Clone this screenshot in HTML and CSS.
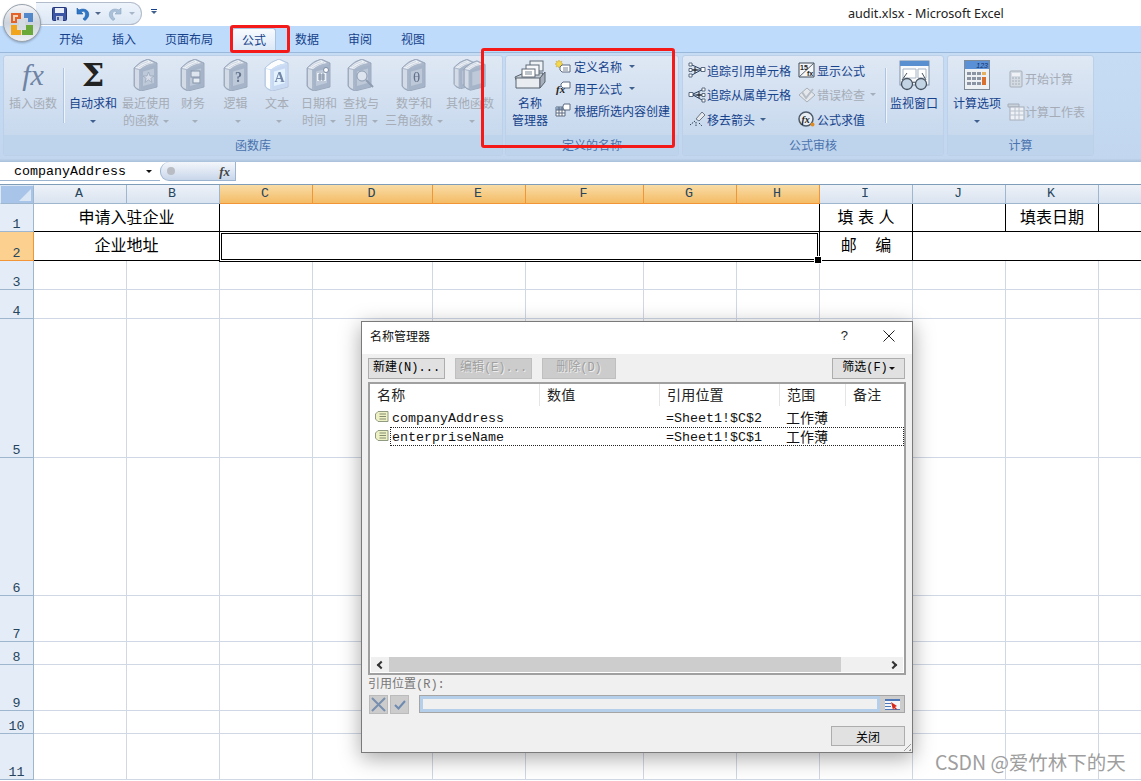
FILE: index.html
```html
<!DOCTYPE html>
<html lang="zh-CN">
<head>
<meta charset="utf-8">
<title>audit.xlsx - Microsoft Excel</title>
<link rel="stylesheet" href="styles.css">
</head>
<body>
<svg class="defs" width="0" height="0" aria-hidden="true">
  <defs>
    <linearGradient id="orbG" x1="0" y1="0" x2="0" y2="1"><stop offset="0" stop-color="#f7f8fa"/><stop offset=".5" stop-color="#ccd3dc"/><stop offset="1" stop-color="#eef1f4"/></linearGradient>
    <symbol id="book" viewBox="0 0 26 32">
      <path d="M1 9Q7 2 15 0L24 4V28L8 32Q2 30 1 27Z" fill="#a9b6c9" stroke="#8d9bb0" stroke-width=".8"/>
      <path d="M2 9Q8 3 15 1L21 4Q13 5 7 10Z" fill="#eef2f7"/>
      <path d="M4 8Q9 4 15 2.500M6 9Q11 5.500 18 3.500" stroke="#b8c3d2" stroke-width=".6" fill="none"/>
      <path d="M7 10.500L23.500 5.500V27.500L8 31.500Z" fill="#a4b2c7"/>
      <path d="M2 10L6 11V30Q3 29 2 27Z" fill="#d3dbe6"/>
      <path d="M10 12.500L21 9.500V24L10 27Z" fill="#bcc7d7"/>
    </symbol>
    <symbol id="tag" viewBox="0 0 14 11">
      <path d="M3 .5H13V10.500H3L.5 8V3Z" fill="#eef1c4" stroke="#8f9a80"/>
      <path d="M4.500 3H11M4.500 5.500H11M4.500 8H11" stroke="#848c70"/>
    </symbol>
    <symbol id="nodes" viewBox="0 0 18 16">
      <path d="M1 1h3v3H1zM1 12h3v3H1zM1 6.500h3v3H1zM13 5.500h4v4h-4z" fill="#fff" stroke="#5a6a80"/>
      <path d="M4 3L13 7M4 8H13M4 13L13 8" stroke="#28405f" fill="none"/>
      <path d="M7 5V11M4.500 8H9.500" stroke="#222"/>
    </symbol>
  </defs>
</svg>

<div class="app">
  <header class="titlebar">
    <div class="qat">
      <svg class="qi" width="15" height="14" viewBox="0 0 15 14"><rect x=".5" y=".5" width="14" height="13" rx="1" fill="#3c55a5" stroke="#25357a"/><rect x="3" y="1" width="9" height="5" fill="#e9eef8"/><rect x="4" y="9" width="7" height="5" fill="#c6cede"/><rect x="5" y="10" width="2" height="3" fill="#3c55a5"/></svg>
      <svg class="qi undo" width="16" height="14" viewBox="0 0 16 14"><path d="M3 1V7H9L7 5Q10 3 11.500 6Q12.500 9 9 12L11 13.500Q16.500 9.500 14 4.500Q10.500 .5 5 3Z" fill="#2f78c8" stroke="#1e5ca8" stroke-width=".6"/></svg>
      <span class="caret caret-dark qc"></span>
      <svg class="qi redo" width="16" height="14" viewBox="0 0 16 14"><path d="M13 1V7H7L9 5Q6 3 4.500 6Q3.500 9 7 12L5 13.500Q-.5 9.500 2 4.500Q5.500 .5 11 3Z" fill="#a9c0d8" stroke="#8ea8c2" stroke-width=".6"/></svg>
      <span class="caret caret-light qc"></span>
    </div>
    <div class="customize"><span class="dash"></span><span class="caret caret-navy"></span></div>
    <div class="doc-title">audit.xlsx - Microsoft Excel</div>
  </header>

  <div class="orb">
    <svg width="38" height="38" viewBox="0 0 38 38">
      <circle cx="19" cy="19" r="18.500" fill="url(#orbG)" stroke="#9aa3ad"/>
      <path d="M8 9h10v6h-4v4H8z" fill="#e2622a"/><path d="M10 11h5v2h-3v4h-2z" fill="#f6d3b8"/>
      <path d="M21 9h9v9h-5v-4h-4z" fill="#3a78c4" opacity=".85"/>
      <path d="M8 21h6v5h4v5H8z" fill="#f0a51c"/><path d="M23 21h7v10H19v-5h4z" fill="#6aa83a"/>
      <path d="M16 16h6v6h-6z" fill="#d5dbe2"/>
    </svg>
  </div>

  <nav class="tabs">
    <span class="tab">开始</span>
    <span class="tab">插入</span>
    <span class="tab">页面布局</span>
    <span class="tab tab-active">公式</span>
    <span class="tab">数据</span>
    <span class="tab">审阅</span>
    <span class="tab">视图</span>
  </nav>

  <section class="ribbon">
    <div class="group g-lib">
      <div class="group-body">
        <div class="cmd off w50"><div class="cmd-icon"><span class="fx-big">fx</span></div><div class="lbl">插入函数</div></div>
        <span class="vsep s1"></span>
        <div class="cmd on w48"><div class="cmd-icon"><span class="sigma">Σ</span></div><div class="lbl">自动求和</div><div class="lbl"><span class="caret caret-navy"></span></div></div>
        <div class="cmd off w50 ml4"><div class="cmd-icon"><svg class="bk" width="26" height="32"><use href="#book"/><path d="M15.500 13l1.500 4h4l-3.200 2.400 1.200 4-3.500-2.500-3.500 2.500 1.200-4L10 17h4z" fill="#d6dde8" stroke="#94a2b6" stroke-width=".7"/></svg></div><div class="lbl">最近使用</div><div class="lbl">的函数<span class="caret caret-grey"></span></div></div>
        <div class="cmd off w44"><div class="cmd-icon"><svg class="bk" width="26" height="32"><use href="#book"/><rect x="11" y="12" width="9" height="6" fill="#dfe5ee" stroke="#7f8ea5"/><rect x="13" y="19" width="7" height="5" fill="#e8edf4" stroke="#7f8ea5"/></svg></div><div class="lbl">财务</div><div class="lbl"><span class="caret caret-grey"></span></div></div>
        <div class="cmd off w41"><div class="cmd-icon"><svg class="bk" width="26" height="32"><use href="#book"/><text x="15.500" y="23" class="bk-q">?</text></svg></div><div class="lbl">逻辑</div><div class="lbl"><span class="caret caret-grey"></span></div></div>
        <div class="cmd off w42"><div class="cmd-icon"><svg class="bk bk-white" width="26" height="32"><use href="#book"/><text x="15.500" y="23" class="bk-a">A</text></svg></div><div class="lbl">文本</div><div class="lbl"><span class="caret caret-grey"></span></div></div>
        <div class="cmd off w42"><div class="cmd-icon"><svg class="bk" width="26" height="32"><use href="#book"/><path d="M11 14h9v8h-9z" fill="#eef2f7"/><path d="M12 16h7M12 18h7M12 20h7M14 14v8M17 14v8" stroke="#7888a0"/><circle cx="20" cy="11" r="2.500" fill="#fff" stroke="#7888a0"/></svg></div><div class="lbl">日期和</div><div class="lbl">时间<span class="caret caret-grey"></span></div></div>
        <div class="cmd off w42"><div class="cmd-icon"><svg class="bk" width="28" height="32"><use href="#book" width="26" height="32"/><circle cx="15" cy="17" r="5" fill="#dfe5ee" stroke="#8b99ae"/><path d="M19 21l7 7" stroke="#8b99ae" stroke-width="2"/></svg></div><div class="lbl">查找与</div><div class="lbl">引用<span class="caret caret-grey"></span></div></div>
        <div class="cmd off w64"><div class="cmd-icon"><svg class="bk" width="26" height="32"><use href="#book"/><text x="15.500" y="23" class="bk-t">θ</text></svg></div><div class="lbl">数学和</div><div class="lbl">三角函数<span class="caret caret-grey"></span></div></div>
        <div class="cmd off w48"><div class="cmd-icon"><svg class="bk" width="34" height="32" viewBox="0 0 34 32"><use href="#book" width="24" height="30"/><use href="#book" x="10" y="1" width="24" height="31"/></svg></div><div class="lbl">其他函数</div><div class="lbl"><span class="caret caret-grey"></span></div></div>
      </div>
      <div class="group-label">函数库</div>
    </div>

    <div class="group g-names">
      <div class="group-body">
        <div class="cmd on w38 ink"><div class="cmd-icon">
          <svg width="32" height="30" viewBox="0 0 32 30"><path d="M1 17L10 13H29L26 22H3Z" fill="#c3cbd5" stroke="#59636f"/><path d="M2 18H26V28H2Z" fill="#e9ecf0" stroke="#59636f"/><path d="M26 18L31 12V22L26 28Z" fill="#a6afbb" stroke="#59636f"/><rect x="16" y="1" width="13" height="10" fill="#eef2f5" stroke="#5f6a77"/><rect x="12" y="5" width="13" height="10" fill="#f6f8fa" stroke="#5f6a77"/><rect x="8" y="9" width="13" height="8" fill="#fff" stroke="#5f6a77"/><path d="M11 12h7M11 14h7" stroke="#7b8794"/></svg>
        </div><div class="lbl">名称</div><div class="lbl">管理器</div></div>
        <div class="small-col names-col">
          <div class="sm on"><svg width="16" height="14" viewBox="0 0 16 14"><path d="M4 1l1 2 2-1-1 2 2 1-2 1 1 2-2-1-1 2-1-2-2 1 1-2-2-1 2-1-1-2 2 1z" fill="#f5d94a" stroke="#c9a52a" stroke-width=".5"/><path d="M7 6H15V13H7L5 11V8Z" fill="#fff" stroke="#5c6b80"/><path d="M8 9h5M8 11h5" stroke="#7a8798"/></svg><span class="sm-text">定义名称</span><span class="caret caret-navy"></span></div>
          <div class="sm on"><svg width="16" height="14" viewBox="0 0 16 14"><text x="1" y="12" class="mini-fx">fx</text><path d="M8 1H15V7H8L6 5V3Z" fill="#fff" stroke="#5c6b80"/></svg><span class="sm-text">用于公式</span><span class="caret caret-navy"></span></div>
          <div class="sm on"><svg width="16" height="14" viewBox="0 0 16 14"><path d="M1 4h9v9H1z" fill="#fff" stroke="#5c6b80"/><path d="M1 4h9v3H1z" fill="#8aa2c0"/><path d="M4 4v9M7 4v9M1 7h9M1 10h9" stroke="#5c6b80"/><path d="M9 1H15V7H9L8 5V3Z" fill="#fff" stroke="#5c6b80"/></svg><span class="sm-text">根据所选内容创建</span></div>
        </div>
      </div>
      <div class="group-label">定义的名称</div>
    </div>

    <div class="group g-audit">
      <div class="group-body">
        <div class="small-col audit-a">
          <div class="sm on"><svg width="18" height="16"><use href="#nodes"/></svg><span class="sm-text">追踪引用单元格</span></div>
          <div class="sm on"><svg width="18" height="16" class="flip"><use href="#nodes"/></svg><span class="sm-text">追踪从属单元格</span></div>
          <div class="sm on"><svg width="18" height="16" viewBox="0 0 18 16"><path d="M8 8L14 1L17 4L11 10Z" fill="#e6e9ee" stroke="#6d7886"/><path d="M7 10L2 14M8 11V15M11 12L14 15" stroke="#2d4159" stroke-dasharray="1.500 1"/></svg><span class="sm-text">移去箭头</span><span class="caret caret-navy"></span></div>
        </div>
        <div class="small-col audit-b">
          <div class="sm on"><svg width="18" height="16" viewBox="0 0 18 16"><path d="M1 1h15v14H1z" fill="#f4f6f8" stroke="#3f4a58"/><path d="M16 1L1 15" stroke="#59636f"/><text x="2" y="8" class="mini-n">15</text><text x="9" y="14" class="mini-n">fx</text></svg><span class="sm-text">显示公式</span></div>
          <div class="sm off"><svg width="18" height="16" viewBox="0 0 18 16"><path d="M9 1L17 8L9 15L1 8Z" fill="#e4e8ec" stroke="#a9b0b9"/><path d="M4 5L8 11L15 2" fill="none" stroke="#b7bdc5" stroke-width="2"/></svg><span class="sm-text">错误检查</span><span class="caret caret-grey"></span></div>
          <div class="sm on"><svg width="18" height="16" viewBox="0 0 18 16"><circle cx="8" cy="8" r="7" fill="#e8edf3" stroke="#4d5a6a" stroke-width="1.500"/><text x="3.500" y="11.500" class="mini-e">fx</text><circle cx="14.500" cy="13.500" r="2" fill="#e08a20"/></svg><span class="sm-text">公式求值</span></div>
        </div>
        <span class="vsep s2"></span>
        <div class="cmd on w48 watch"><div class="cmd-icon">
          <svg width="31" height="31" viewBox="0 0 31 31"><rect x="1" y="1" width="29" height="24" fill="#f8fafc" stroke="#7f92aa"/><rect x="1" y="1" width="29" height="5" fill="#5a8fd0"/><path d="M4 9h13v9H4zM19 9h8v9h-8z" fill="#fff" stroke="#a9b5c4"/><circle cx="8" cy="24" r="5.500" fill="#c3d4e4" stroke="#47525f" stroke-width="1.300"/><circle cx="22" cy="24" r="5.500" fill="#c3d4e4" stroke="#47525f" stroke-width="1.300"/><path d="M13 23q2-2 4 0M3 20L8 13M27 20L23 13" stroke="#47525f" fill="none"/></svg>
        </div><div class="lbl">监视窗口</div></div>
      </div>
      <div class="group-label">公式审核</div>
    </div>

    <div class="group g-calc">
      <div class="group-body">
        <div class="cmd on w48 calc-big"><div class="cmd-icon">
          <svg width="26" height="30" viewBox="0 0 26 30"><rect x=".5" y=".5" width="25" height="29" fill="#eef1f4" stroke="#7f8a98"/><path d="M1 1h24v8H1z" fill="#5a90d6"/><text x="24" y="8" class="calc-n">123</text><g class="keys"><rect x="3" y="12" width="4" height="3"/><rect x="8" y="12" width="4" height="3"/><rect x="13" y="12" width="4" height="3"/><rect x="3" y="17" width="4" height="3"/><rect x="8" y="17" width="4" height="3"/><rect x="13" y="17" width="4" height="3"/><rect x="3" y="22" width="4" height="3"/><rect x="8" y="22" width="4" height="3"/><rect x="13" y="22" width="4" height="3"/></g><rect x="18" y="12" width="4" height="3" fill="#e4b060"/><rect x="18" y="17" width="4" height="8" fill="#d87030"/></svg>
        </div><div class="lbl">计算选项</div><div class="lbl"><span class="caret caret-navy"></span></div></div>
        <div class="small-col calc-col">
          <div class="sm off calc-first"><svg width="14" height="18" viewBox="0 0 14 18"><rect x="1" y="1" width="12" height="16" rx="1" fill="#d5dbe3" stroke="#a5aeb9"/><path d="M3 3h8v3H3z" fill="#eef1f5"/><path d="M3 8h8M3 11h8M3 14h8" stroke="#a5aeb9" stroke-dasharray="2 1"/></svg><span class="sm-text">开始计算</span></div>
          <div class="sm off calc-second"><svg width="18" height="18" viewBox="0 0 18 18"><path d="M1 1h11v3H1z" fill="#c9d1db" stroke="#a5aeb9"/><rect x="3" y="4" width="14" height="13" fill="#eef1f5" stroke="#a5aeb9"/><path d="M3 8h14M3 12h14M8 4v13M12 4v13" stroke="#bac2cc"/></svg><span class="sm-text">计算工作表</span></div>
        </div>
      </div>
      <div class="group-label">计算</div>
    </div>
  </section>

  <div class="formula-strip"></div>
  <div class="formula-bar">
    <div class="namebox"><span class="namebox-text">companyAddress</span><span class="caret caret-black"></span></div>
    <div class="fx-pill"><span class="pill-dot"></span><span class="pill-fx">fx</span></div>
  </div>

  <div class="sheet">
    <div class="corner"><span class="corner-tri"></span></div>
    <div class="ch">A</div><div class="ch">B</div><div class="ch sel">C</div><div class="ch sel">D</div><div class="ch sel">E</div><div class="ch sel">F</div><div class="ch sel">G</div><div class="ch sel">H</div><div class="ch">I</div><div class="ch">J</div><div class="ch">K</div><div class="ch"></div>

    <div class="rh">1</div>
    <div class="c blk-b blk-r span2 txt">申请入驻企业</div>
    <div class="c blk-b blk-r span6"></div>
    <div class="c blk-b blk-r txt">填 表 人</div>
    <div class="c blk-b blk-r"></div>
    <div class="c blk-b blk-r txt">填表日期</div>
    <div class="c blk-b"></div>

    <div class="rh sel">2</div>
    <div class="c blk-b blk-r span2 txt">企业地址</div>
    <div class="c span6 active"></div>
    <div class="c blk-b blk-r txt">邮&nbsp;&nbsp;&nbsp;&nbsp;编</div>
    <div class="c blk-b span3"></div>

    <div class="rh">3</div><div class="c"></div><div class="c"></div><div class="c"></div><div class="c"></div><div class="c"></div><div class="c"></div><div class="c"></div><div class="c"></div><div class="c"></div><div class="c"></div><div class="c"></div><div class="c"></div>
    <div class="rh">4</div><div class="c"></div><div class="c"></div><div class="c"></div><div class="c"></div><div class="c"></div><div class="c"></div><div class="c"></div><div class="c"></div><div class="c"></div><div class="c"></div><div class="c"></div><div class="c"></div>
    <div class="rh">5</div><div class="c"></div><div class="c"></div><div class="c"></div><div class="c"></div><div class="c"></div><div class="c"></div><div class="c"></div><div class="c"></div><div class="c"></div><div class="c"></div><div class="c"></div><div class="c"></div>
    <div class="rh">6</div><div class="c"></div><div class="c"></div><div class="c"></div><div class="c"></div><div class="c"></div><div class="c"></div><div class="c"></div><div class="c"></div><div class="c"></div><div class="c"></div><div class="c"></div><div class="c"></div>
    <div class="rh">7</div><div class="c"></div><div class="c"></div><div class="c"></div><div class="c"></div><div class="c"></div><div class="c"></div><div class="c"></div><div class="c"></div><div class="c"></div><div class="c"></div><div class="c"></div><div class="c"></div>
    <div class="rh">8</div><div class="c"></div><div class="c"></div><div class="c"></div><div class="c"></div><div class="c"></div><div class="c"></div><div class="c"></div><div class="c"></div><div class="c"></div><div class="c"></div><div class="c"></div><div class="c"></div>
    <div class="rh">9</div><div class="c"></div><div class="c"></div><div class="c"></div><div class="c"></div><div class="c"></div><div class="c"></div><div class="c"></div><div class="c"></div><div class="c"></div><div class="c"></div><div class="c"></div><div class="c"></div>
    <div class="rh">10</div><div class="c"></div><div class="c"></div><div class="c"></div><div class="c"></div><div class="c"></div><div class="c"></div><div class="c"></div><div class="c"></div><div class="c"></div><div class="c"></div><div class="c"></div><div class="c"></div>
    <div class="rh">11</div><div class="c"></div><div class="c"></div><div class="c"></div><div class="c"></div><div class="c"></div><div class="c"></div><div class="c"></div><div class="c"></div><div class="c"></div><div class="c"></div><div class="c"></div><div class="c"></div>
  </div>
</div>

<div class="mark mark-tab"></div>
<div class="mark mark-names"></div>

<div class="dialog">
  <div class="dlg-title">
    <span class="dlg-name">名称管理器</span>
    <span class="dlg-help">?</span>
    <svg class="dlg-close" width="12" height="12" viewBox="0 0 12 12"><path d="M.5 .5L11.500 11.500M11.500 .5L.5 11.500" stroke="#222" fill="none"/></svg>
  </div>
  <div class="dlg-body">
    <div class="dlg-tools">
      <button class="btn b-new">新建(N)...</button>
      <button class="btn dis b-edit">编辑(E)...</button>
      <button class="btn dis b-del">删除(D)</button>
      <button class="btn b-filter">筛选(F)<span class="caret caret-black"></span></button>
    </div>
    <div class="list">
      <div class="list-head">
        <span class="lh lh1">名称</span><span class="lh lh2">数值</span><span class="lh lh3">引用位置</span><span class="lh lh4">范围</span><span class="lh lh5">备注</span>
      </div>
      <div class="list-row">
        <svg class="tag" width="14" height="11"><use href="#tag"/></svg>
        <span class="lc name">companyAddress</span><span class="lc val"></span><span class="lc ref">=Sheet1!$C$2</span><span class="lc scope">工作薄</span>
      </div>
      <div class="list-row focus">
        <svg class="tag" width="14" height="11"><use href="#tag"/></svg>
        <span class="lc name">enterpriseName</span><span class="lc val"></span><span class="lc ref">=Sheet1!$C$1</span><span class="lc scope">工作薄</span>
      </div>
      <div class="list-space"></div>
      <div class="hscroll">
        <span class="arrow arrow-l"></span>
        <span class="thumb"></span>
        <span class="arrow arrow-r"></span>
      </div>
    </div>
    <div class="ref-label">引用位置(R):</div>
    <div class="ref-row">
      <span class="mini-btn"><svg width="15" height="15" viewBox="0 0 15 15"><path d="M1 1L14 14M14 1L1 14" stroke="#7890b0" stroke-width="2"/></svg></span>
      <span class="mini-btn"><svg width="12" height="10" viewBox="0 0 12 10"><path d="M1 5L4.500 8.500L11 1" stroke="#6f8ab0" stroke-width="2" fill="none"/></svg></span>
      <span class="ref-input"><span class="ref-inner"></span></span>
      <span class="ref-pick"><svg width="15" height="11" viewBox="0 0 15 11"><path d="M0 0h15v11H0z" fill="#f4f6fa"/><path d="M0 0h15v2H0zM0 4h6v1H0zM0 7h6v1H0zM0 10h15v1H0z" fill="#4f78b8"/><path d="M6 3l6 4-2 1 2 2-1 1-2-2-1 2z" fill="#d8281c"/></svg></span>
    </div>
    <div class="dlg-foot"><button class="btn b-close">关闭</button></div>
  </div>
  <span class="grip"></span>
</div>

<div class="watermark">CSDN @爱竹林下的天</div>
</body>
</html>
```

FILE: styles.css
```css
* { box-sizing: border-box; }
html, body { margin: 0; padding: 0; height: 781px; overflow: hidden; background: #fff; }
body { font-family: "Noto Sans CJK SC", "Noto Sans", sans-serif; font-size: 12px; color: #000; position: relative; }
.defs { position: absolute; }
svg { display: block; flex: none; }

.app { width: 1141px; height: 781px; overflow: hidden; }

/* title bar */
.titlebar { height: 26px; display: flex; align-items: flex-start; background: #fff; padding-left: 36px; }
.qat { width: 106px; height: 23px; margin-top: 2px; display: flex; align-items: center; padding-left: 16px; border: 1px solid #b3bccb; border-left: 0; border-radius: 0 12px 12px 0; background: linear-gradient(#eef4fb, #dbe7f5); }
.qi.undo { margin-left: 7px; }
.qi.redo { margin-left: 7px; }
.qc { margin-left: 5px; }
.customize { margin-left: 6px; width: 12px; height: 23px; display: flex; flex-direction: column; align-items: center; padding-top: 9px; gap: 1px; }
.dash { width: 6px; height: 1px; background: #15428b; }
.doc-title { position: absolute; left: 848px; top: 5px; font: 12.600px/17px "Noto Sans", sans-serif; color: #222; white-space: pre; }

.orb { position: absolute; left: 3px; top: 4px; width: 38px; height: 38px; filter: drop-shadow(0 1px 1px rgba(60,80,110,.4)); }

/* caret */
.caret { display: inline-block; width: 0; height: 0; border: 3px solid transparent; border-bottom-width: 0; border-top-width: 3px; vertical-align: middle; flex: none; }
.caret-navy { border-top-color: #3f5f8f; }
.caret-dark { border-top-color: #51688c; }
.caret-light { border-top-color: #a7b6c8; }
.caret-grey { border-top-color: #a5afbc; margin-left: 4px; }
.caret-black { border-top-color: #111; }

/* tabs */
.tabs { height: 26px; padding-left: 45px; display: flex; gap: 1px; background: #bfdbfb; }
.tab { padding: 0 14px; line-height: 26px; font-size: 12px; color: #15428b; }
.tab-active { margin: 2px 4px 0 4px; padding: 0 9px; line-height: 22px; background: linear-gradient(#f8fbfe, #d9e6f6); border: 1px solid #a8c2e0; border-bottom: 0; border-radius: 3px 3px 0 0; }

/* ribbon */
.ribbon { height: 106px; display: flex; gap: 2px; padding: 2px 0 0 3px; background: linear-gradient(#c6dcf5, #c2d6ef); border-top: 1px solid #9ab8da; }
.group { height: 101px; display: flex; flex-direction: column; border: 1px solid #bcd0e8; border-radius: 3px; background: linear-gradient(#dfe8f4, #c8d9ee 78%); }
.g-lib { width: 500px; }
.g-names { width: 174px; margin-right: 1px; }
.g-audit { width: 262px; margin-right: 1px; }
.g-calc { width: 147px; }
.group-body { height: 79px; display: flex; }
.group-label { height: 20px; line-height: 19px; text-align: center; color: #4a72ac; background: #bed4ed; border-radius: 0 0 3px 3px; }
.g-lib .group-body { padding-left: 4px; }
.g-names .group-body { padding-left: 5px; }
.g-calc .group-body { padding-left: 5px; }

.cmd { display: flex; flex-direction: column; align-items: center; flex: none; }
.cmd-icon { height: 38px; display: flex; align-items: center; justify-content: center; }
.lbl { height: 17px; line-height: 17px; white-space: nowrap; text-align: center; }
.on .lbl, .sm.on { color: #15428b; }
.off .lbl, .sm.off { color: #a5acb6; }
.ink .lbl { color: #15428b; }
.w38 { width: 38px; } .w41 { width: 41px; } .w42 { width: 42px; } .w44 { width: 44px; } .w48 { width: 48px; } .w50 { width: 50px; } .w64 { width: 64px; }
.ml4 { margin-left: 4px; }
.vsep { width: 1px; flex: none; background: #aec4df; box-shadow: 1px 0 0 #eef4fb; }
.s1 { height: 55px; margin: 12px 5px 0 5px; }
.s2 { height: 55px; margin: 12px 4px 0 18px; }

.fx-big { font: italic 30px/1 "Liberation Serif", serif; color: #6f83a3; }
.sigma { font: bold 32px/1 "DejaVu Serif", serif; color: #222; }
.bk { opacity: .95; }
.bk-white { filter: brightness(1.22); }
.bk-q, .bk-a, .bk-t { text-anchor: middle; font-family: "Liberation Serif", serif; font-weight: bold; font-size: 14px; fill: #5a6b86; }
.bk-t { font-weight: normal; font-size: 15px; }

.small-col { display: flex; flex-direction: column; flex: none; }
.sm { display: flex; align-items: center; white-space: nowrap; gap: 3px; }
.sm .caret { margin-left: 4px; }
.names-col { margin-left: 6px; margin-top: -1px; }
.names-col .sm { height: 22px; }
.audit-a { margin-left: 5px; padding-top: 2px; width: 110px; }
.audit-a .sm, .audit-b .sm { height: 24.500px; gap: 1px; }
.audit-b { padding-top: 2px; width: 69px; }
.calc-big { margin-right: 6px; }
.calc-col { padding-top: 6px; }
.calc-col .sm { height: 33px; }
.calc-first { padding-left: 2px; gap: 2px; }
.calc-second { gap: 0; }
.mini-fx { font: italic bold 11px "Liberation Serif", serif; fill: #222; }
.mini-n { font: bold 7px "Liberation Sans", sans-serif; fill: #222; }
.mini-e { font: italic bold 10px "Liberation Serif", serif; fill: #222; }
.calc-n { font: italic 7px "Liberation Sans", sans-serif; fill: #12306a; text-anchor: end; }
.keys rect { fill: #8a94a3; }
.flip { transform: scaleX(-1); }

/* formula bar */
.formula-strip { height: 4px; background: linear-gradient(#c6d9f0, #a9c0da); }
.formula-bar { height: 23px; display: flex; align-items: flex-start; border-bottom: 1px solid #7f9db9; background: #fff; }
.namebox { width: 160px; height: 19px; padding: 1px 8px 0 14px; display: flex; align-items: center; justify-content: space-between; border-bottom: 1px solid #9db4d0; }
.namebox-text { font: 13.330px/18px "Liberation Mono", monospace; color: #000; }
.fx-pill { width: 76px; height: 19px; display: flex; align-items: center; justify-content: space-between; padding: 0 5px 0 6px; border: 1px solid #9db4d0; border-top: 0; border-radius: 9px 0 0 9px; background: linear-gradient(#f4f7fb, #c8d6ea); }
.pill-dot { width: 8px; height: 8px; border-radius: 50%; background: #b9bdc3; }
.pill-fx { font: italic bold 13px/1 "Liberation Serif", serif; color: #444; }

/* sheet */
.sheet { width: 1192px; display: grid; grid-template-columns: 34px 93px 93px 93px 120px 93px 118px 93px 83px 93px 93px 93px 93px; grid-template-rows: 19px 28px 29px 29px 29px 139px 138px 46px 23px 46px 23px 46px; }
.corner { background: #a9c4e9; border-right: 1px solid #9eb6ce; border-bottom: 1px solid #9eb6ce; border-left: 1px solid #dfe9f5; border-top: 1px solid #dfe9f5; position: relative; }
.corner-tri { position: absolute; right: 2px; bottom: 2px; border: 6px solid transparent; border-right-color: #dbe6f5; border-bottom-color: #dbe6f5; }
.ch { display: flex; align-items: center; justify-content: center; padding-right: 2px; font: 13.330px/1 "Liberation Mono", monospace; color: #27455c; background: linear-gradient(#eef2f8, #d9e3f0); border-right: 1px solid #9eb6ce; border-bottom: 1px solid #9eb6ce; }
.ch.sel { background: linear-gradient(#f9dca6, #f4bc66); border-right-color: #f29536; border-bottom-color: #f29536; }
.rh { display: flex; align-items: flex-end; justify-content: center; font: 13.330px/12px "Liberation Mono", monospace; color: #27455c; background: #e4ecf7; border-right: 1px solid #9eb6ce; border-bottom: 1px solid #9eb6ce; }
.rh.sel { background: #fcd08e; border-right-color: #f29536; border-bottom-color: #f29536; }
.c { border-right: 1px solid #d0d7e5; border-bottom: 1px solid #d0d7e5; background: #fff; }
.span2 { grid-column: span 2; } .span3 { grid-column: span 3; } .span6 { grid-column: span 6; }
.blk-b { border-bottom: 1px solid #000; }
.blk-r { border-right: 1px solid #000; }
.txt { display: flex; align-items: center; justify-content: center; padding-bottom: 4px; font-size: 16px; white-space: pre; color: #000; word-spacing: 1px; }
.active { border: 1px solid #000; margin: -1px 0 -1px -1px; box-shadow: inset 0 0 0 1px #fff, inset 0 0 0 2px #000; position: relative; }
.active::after { content: ""; position: absolute; right: -3px; bottom: -3px; width: 6px; height: 6px; background: #000; border: 1px solid #fff; }

/* annotation marks */
.mark { position: absolute; border: 3px solid #f51a1a; border-radius: 3px; pointer-events: none; }
.mark-tab { left: 230px; top: 25px; width: 60px; height: 28px; }
.mark-names { left: 481px; top: 48px; width: 194px; height: 100px; }

/* dialog */
.dialog { position: absolute; left: 361px; top: 321px; width: 552px; height: 432px; background: #f0f0f0; border: 1px solid #7a7a7a; box-shadow: 0 5px 20px rgba(0,0,0,.35); display: flex; flex-direction: column; }
.dlg-title { height: 32px; flex: none; background: #fff; display: flex; align-items: center; padding: 0 17px 5px 8px; }
.dlg-name { font-size: 12px; flex: 1; color: #111; }
.dlg-help { font: 13px "Liberation Sans", sans-serif; margin-right: 35px; color: #222; }
.dlg-body { flex: 1; display: flex; flex-direction: column; padding: 4px 6px 0 6px; }
.dlg-tools { display: flex; height: 21px; flex: none; }
.btn { height: 21px; padding: 0; font-family: "Liberation Mono", "Noto Sans CJK SC", monospace; font-size: 12px; line-height: 17px; background: #e1e1e1; border: 1px solid #adadad; color: #000; white-space: nowrap; }
.btn.dis { background: #ccc; border-color: #bfbfbf; color: #a0a0a0; text-shadow: 1px 1px 0 #eee; }
.b-new { width: 77px; }
.b-edit { width: 77px; margin-left: 10px; }
.b-del { width: 74px; margin-left: 10px; }
.b-filter { width: 73px; margin-left: auto; margin-right: 1px; display: flex; align-items: center; justify-content: center; gap: 1px; }
.list { height: 293px; flex: none; margin: 3px 0 0 0; border: 2px solid #a0a0a0; background: #fff; display: flex; flex-direction: column; width: 538px; }
.list-head { height: 24px; flex: none; display: flex; font-size: 14px; line-height: 21px; color: #222; letter-spacing: .2px; }
.lh { padding-left: 7px; border-right: 1px solid #e5e5e5; height: 22px; }
.lh1 { width: 170px; }
.lh2 { width: 120px; }
.lh3 { width: 120px; }
.lh4 { width: 66px; }
.lh5 { flex: 1; border-right: 0; }
.list-row { height: 19px; flex: none; display: flex; align-items: center; padding-left: 5px; margin-right: 1px; font: 13.330px/18px "Liberation Mono", "Noto Sans CJK SC", monospace; color: #111; position: relative; }
.tag { margin-top: -2px; }
.lc { white-space: nowrap; }
.name { width: 274px; margin-left: 3px; padding-top: 2px; }
.ref { width: 120px; padding-top: 2px; }
.scope { font-family: "Noto Sans CJK SC", sans-serif; font-size: 14px; padding-bottom: 2px; }
.focus::after { content: ""; position: absolute; left: 20px; right: -1px; top: 0; bottom: 0; border: 1px dotted #222; }
.list-space { flex: 1; }
.hscroll { height: 15px; flex: none; margin: 0 1px 1px; display: flex; align-items: center; background: #f0f0f0; }
.thumb { width: 452px; height: 15px; background: #cdcdcd; margin-left: 5px; }
.arrow { width: 6px; height: 6px; border-top: 2px solid #333; border-left: 2px solid #333; margin-left: 6px; }
.arrow-l { transform: rotate(-45deg); margin-left: 7px; }
.arrow-r { transform: rotate(135deg); margin-left: auto; margin-right: 7px; }
.ref-label { height: 19px; flex: none; margin-top: 1px; font: 12px/18px "Liberation Mono", "Noto Sans CJK SC", monospace; color: #777; }
.ref-row { display: flex; height: 19px; flex: none; }
.mini-btn { width: 19px; height: 19px; margin-left: 1px; margin-right: 1px; flex: none; display: flex; align-items: center; justify-content: center; background: #ccc; border: 1px solid #bbb; }
.ref-input { width: 461px; height: 18px; margin-left: 9px; padding: 3px; background: #b5cfea; border: 1px solid #a5a5a5; border-right: 0; }
.ref-inner { display: block; height: 100%; background: #f0f0f0; }
.ref-pick { width: 25px; height: 18px; display: flex; align-items: center; justify-content: center; background: #ccc; border: 1px solid #a5a5a5; border-left: 0; margin-right: 1px; }
.dlg-foot { display: flex; justify-content: flex-end; margin-top: 12px; }
.b-close { width: 74px; height: 20px; margin-right: 1px; font-family: "Noto Sans CJK SC", sans-serif; font-size: 12px; }
.grip { position: absolute; right: 1px; bottom: 1px; width: 11px; height: 11px; background: repeating-linear-gradient(135deg, transparent 0 2px, #9a9a9a 2px 3px, #f0f0f0 3px 4px); clip-path: polygon(100% 0, 100% 100%, 0 100%); }

.watermark { position: absolute; left: 935px; top: 749px; font-size: 19.500px; line-height: 26px; color: #9e9e9e; white-space: nowrap; }
```
